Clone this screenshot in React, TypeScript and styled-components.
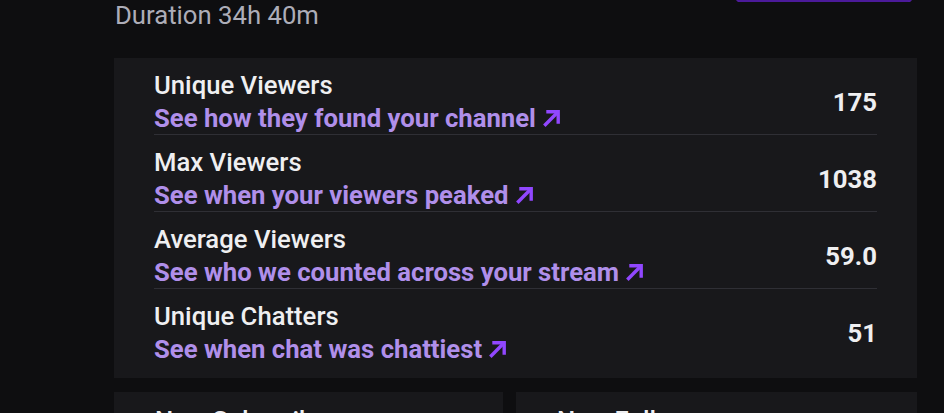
import React from 'react';
import styled, { createGlobalStyle } from 'styled-components';

const BG = '#0e0e10';
const CARD = '#18181b';
const LINK = '#b08fea';
const ARROW = '#9147ff';
const FONT_SIZE = '25.7px';

const GlobalStyle = createGlobalStyle`
  html, body {
    margin: 0;
    padding: 0;
    background: ${BG};
    font-family: Roboto, "Noto Sans", "Liberation Sans", sans-serif;
    overflow: hidden;
  }
`;

const Page = styled.div`
  width: 944px;
  height: 413px;
  padding: 0 27px 0 114px;
  box-sizing: border-box;
  background: ${BG};
  overflow: hidden;
`;

const Header = styled.div`
  display: flex;
  justify-content: space-between;
  align-items: flex-start;
  margin-bottom: 28px;
`;

const Duration = styled.div`
  color: #adadb8;
  font-size: ${FONT_SIZE};
  line-height: 30px;
  padding-left: 1px;
`;

// primary action button, mostly scrolled out of view above
const ActionButton = styled.div`
  width: 176px;
  height: 36px;
  margin-top: -34px;
  margin-right: 5px;
  background: #772ce8;
  border-radius: 4px;
  box-shadow: inset 0 -2px 0 #4b1a9a;
`;

const Card = styled.section`
  background: ${CARD};
  padding: 0 40px 13px;
`;

const StatRow = styled.div`
  display: flex;
  align-items: center;
  justify-content: space-between;
  padding: 12px 0 1px;
  border-bottom: 1px solid #2f2f35;

  &:last-child {
    border-bottom: none;
  }
`;

const StatText = styled.div`
  display: flex;
  flex-direction: column;
`;

const StatTitle = styled.div`
  color: #efeff1;
  font-size: ${FONT_SIZE};
  font-weight: 500;
  line-height: 30px;
  margin-bottom: 3px;
`;

const StatLink = styled.a`
  display: inline-flex;
  align-items: center;
  gap: 7px;
  color: ${LINK};
  font-size: ${FONT_SIZE};
  font-weight: 700;
  line-height: 30px;
  text-decoration: none;
  cursor: pointer;
`;

const StatValue = styled.div`
  color: #efeff1;
  font-size: ${FONT_SIZE};
  font-weight: 700;
  line-height: 30px;
`;

const SubGrid = styled.div`
  display: grid;
  grid-template-columns: 389px 1fr;
  gap: 13px;
  margin-top: 14px;
`;

const SubCard = styled.section`
  background: ${CARD};
  padding: 13px 40px 20px 41px;
  color: #efeff1;
  font-size: ${FONT_SIZE};
  font-weight: 500;
  line-height: 30px;
  height: 80px;
`;

const ArrowIcon = () => (
  <svg width="18" height="18" viewBox="0 0 18 18" fill="none">
    <path d="M2.5 15.5 L13.5 4.5" stroke={ARROW} strokeWidth="3.4" strokeLinecap="square" />
    <path d="M5 2.8 H15.2 V13" stroke={ARROW} strokeWidth="3.4" strokeLinecap="square" />
  </svg>
);

const stats = [
  { title: 'Unique Viewers', link: 'See how they found your channel', value: '175' },
  { title: 'Max Viewers', link: 'See when your viewers peaked', value: '1038' },
  { title: 'Average Viewers', link: 'See who we counted across your stream', value: '59.0' },
  { title: 'Unique Chatters', link: 'See when chat was chattiest', value: '51' },
];

export default function App() {
  return (
    <>
      <GlobalStyle />
      <Page>
        <Header>
          <Duration>Duration 34h 40m</Duration>
          <ActionButton />
        </Header>

        <Card>
          {stats.map(s => (
            <StatRow key={s.title}>
              <StatText>
                <StatTitle>{s.title}</StatTitle>
                <StatLink>
                  {s.link}
                  <ArrowIcon />
                </StatLink>
              </StatText>
              <StatValue>{s.value}</StatValue>
            </StatRow>
          ))}
        </Card>

        <SubGrid>
          <SubCard>New Subscribers</SubCard>
          <SubCard>New Followers</SubCard>
        </SubGrid>
      </Page>
    </>
  );
}
